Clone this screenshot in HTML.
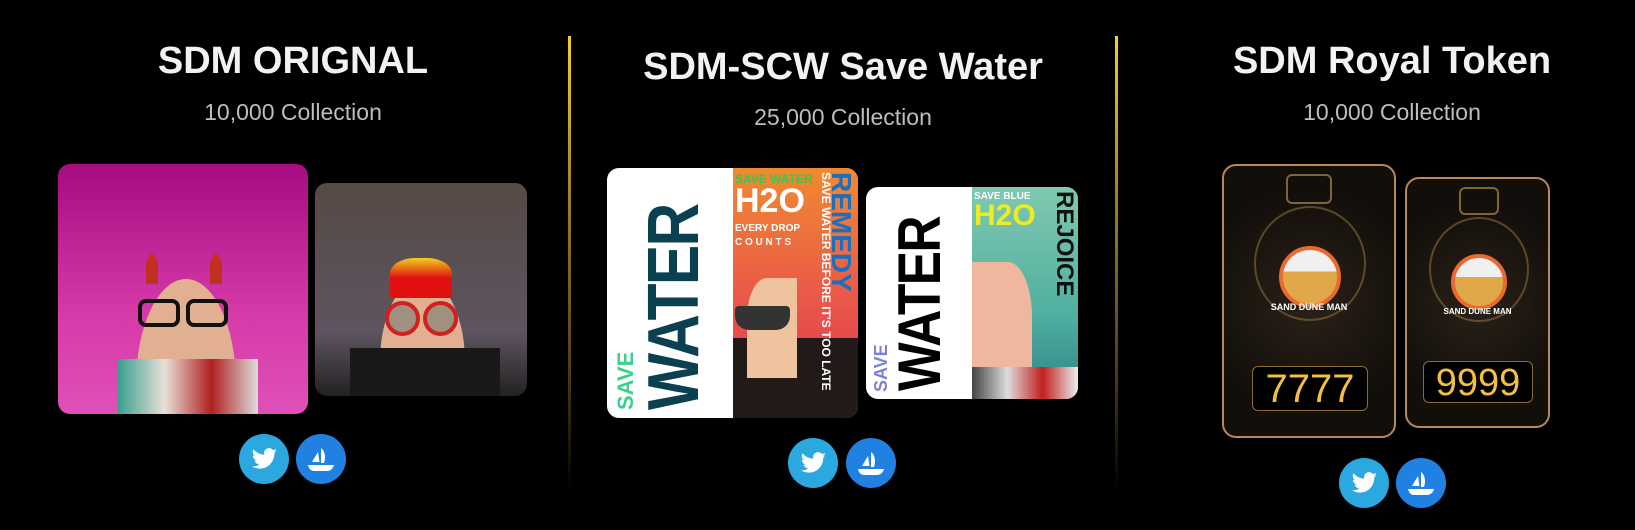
<!DOCTYPE html>
<html><head><meta charset="utf-8"><style>
*{margin:0;padding:0;box-sizing:border-box}
body{width:1635px;height:530px;background:#000;position:relative;overflow:hidden;font-family:"Liberation Sans",sans-serif}
.a{position:absolute}
.t{position:absolute;color:#f2f2f2;font-weight:bold;font-size:38px;text-align:center;white-space:nowrap;transform:translateX(-50%)}
.s{position:absolute;color:#bdbdbd;font-size:23px;text-align:center;white-space:nowrap;transform:translateX(-50%)}
.div{position:absolute;width:3px;top:36px;height:455px;background:linear-gradient(#f5d020,#b08a20 30%,#4a3a12 75%,#000)}
.ic{position:absolute;width:50px;height:50px;border-radius:50%}
.tw{background:#2aa8df}.os{background:#2081e2}
.ic svg{position:absolute;left:0;top:0}
.rot{position:absolute;transform-origin:left top;transform:rotate(-90deg);white-space:nowrap;font-weight:bold}
.rc{position:absolute;border-radius:14px;background:radial-gradient(circle at 50% 50%,#2a2218,#120e0a 70%);border:2px solid #b8875a;overflow:hidden}
.num{position:absolute;background:#000;border:1px solid #8a6a3a;border-radius:6px;color:#f2c040;text-align:center;font-weight:normal}
</style></head><body>

<div class="t" style="left:293px;top:40px">SDM ORIGNAL</div>
<div class="s" style="left:293px;top:99px">10,000 Collection</div>
<div class="t" style="left:843px;top:46px">SDM-SCW Save Water</div>
<div class="s" style="left:843px;top:104px">25,000 Collection</div>
<div class="t" style="left:1392px;top:40px">SDM Royal Token</div>
<div class="s" style="left:1392px;top:99px">10,000 Collection</div>

<div class="div" style="left:568px"></div>
<div class="div" style="left:1115px"></div>

<!-- col1 images -->
<div class="a" style="left:58px;top:164px;width:250px;height:250px;border-radius:12px;overflow:hidden;background:linear-gradient(#a50c80,#d63aa8 60%,#e050b8)">
  <div class="a" style="left:78px;top:115px;width:100px;height:150px;background:#e0b090;border-radius:50% 50% 0 0/70% 70% 0 0"></div>
  <div class="a" style="left:60px;top:195px;width:140px;height:60px;background:linear-gradient(90deg,#3aa090,#e8e0d8,#b02020,#ddd)"></div>
  <div class="a" style="left:80px;top:135px;width:42px;height:28px;border:4px solid #111;border-radius:8px"></div>
  <div class="a" style="left:128px;top:135px;width:42px;height:28px;border:4px solid #111;border-radius:8px"></div>
  <div class="a" style="left:88px;top:90px;width:12px;height:30px;background:#c03020;border-radius:50% 50% 0 0"></div>
  <div class="a" style="left:152px;top:90px;width:12px;height:30px;background:#c03020;border-radius:50% 50% 0 0"></div>
</div>
<div class="a" style="left:315px;top:183px;width:212px;height:213px;border-radius:12px;overflow:hidden;background:linear-gradient(#554a45,#5e5460 70%,#222)">
  <div class="a" style="left:65px;top:95px;width:85px;height:120px;background:#e0b090;border-radius:50% 50% 0 0/70% 70% 0 0"></div>
  <div class="a" style="left:75px;top:75px;width:62px;height:40px;background:linear-gradient(#f0d020,#e01010 50%);border-radius:40% 40% 0 0"></div>
  <div class="a" style="left:35px;top:165px;width:150px;height:50px;background:#1a1818"></div>
  <div class="a" style="left:70px;top:118px;width:35px;height:35px;border:4px solid #d02020;border-radius:50%;background:#a09080"></div>
  <div class="a" style="left:108px;top:118px;width:35px;height:35px;border:4px solid #d02020;border-radius:50%;background:#a09080"></div>
</div>
<div class="ic tw" style="left:239px;top:434px"><svg width="50" height="50" viewBox="0 0 50 50"><path fill="#fff" d="M38 17c-1 .5-2 .7-3 .8 1-.7 2-1.7 2.3-3-1 .6-2 1-3.3 1.3a5 5 0 0 0-8.7 4.6C21 20.5 17 18.5 14.5 15.3c-1.4 2.3-.7 5.3 1.6 6.8-.8 0-1.6-.3-2.3-.6 0 2.5 1.8 4.6 4.1 5.1-.8.2-1.6.3-2.3.1.6 2 2.5 3.5 4.7 3.5-2.1 1.7-4.8 2.4-7.4 2.1 2.3 1.5 5 2.3 7.8 2.3 9.4 0 14.6-7.8 14.6-14.6v-.7c1-.7 1.8-1.6 2.5-2.5z"/></svg></div>
<div class="ic os" style="left:296px;top:434px"><svg width="50" height="50" viewBox="0 0 50 50"><path fill="#fff" d="M16 28l6-10 1.5 10zM25 14c4 3 5 9 3 15h-3zM12 31h26c-1 4-4 6-7 6H18c-3 0-5-2-6-6z"/></svg></div>

<!-- col2 cards -->
<div class="a" style="left:607px;top:168px;width:251px;height:250px;border-radius:12px;overflow:hidden;background:#fff">
  <div class="a" style="left:126px;top:0;width:125px;height:250px;background:linear-gradient(#f08a30,#ea5a48 50%,#e03058)"></div>
  <div class="a" style="left:126px;top:170px;width:125px;height:80px;background:#221a18"></div>
  <div class="a" style="left:140px;top:110px;width:50px;height:100px;background:#efc39e;border-radius:40% 0 0 0"></div>
  <div class="a" style="left:128px;top:138px;width:55px;height:24px;background:#333;border-radius:4px 4px 14px 14px"></div>
  <div class="rot" style="left:36px;top:242px;font-size:72px;color:#0a4050;line-height:62px;letter-spacing:-2px;transform:rotate(-90deg) scaleX(.84)">WATER</div>
  <div class="rot" style="left:7px;top:242px;font-size:22px;color:#3ecf8e;line-height:24px">SAVE</div>
  <div class="a" style="left:128px;top:4px;font-size:12px;color:#2ecc50;font-weight:bold">SAVE WATER</div>
  <div class="a" style="left:128px;top:14px;font-size:34px;color:#fff;font-weight:bold">H2O</div>
  <div class="a" style="left:128px;top:54px;font-size:10px;color:#fff;font-weight:bold;line-height:14px">EVERY DROP<br>C O U N T S</div>
  <div class="rot" style="font-size:28px;color:#1a6fc0;transform:rotate(90deg);left:250px;top:4px">REMEDY</div>
  <div class="rot" style="transform:rotate(90deg);left:226px;top:4px;font-size:12px;color:#fff">SAVE WATER BEFORE IT'S TOO LATE</div>
</div>
<div class="a" style="left:866px;top:187px;width:212px;height:212px;border-radius:12px;overflow:hidden;background:#fff">
  <div class="a" style="left:106px;top:0;width:106px;height:212px;background:linear-gradient(#80c8b0,#50b0a0 60%,#308088)"></div>
  <div class="a" style="left:106px;top:75px;width:60px;height:137px;background:#efb89e;border-radius:0 40% 0 0"></div>
  <div class="a" style="left:106px;top:180px;width:106px;height:32px;background:linear-gradient(90deg,#444,#ddd,#c02020,#eee)"></div>
  <div class="rot" style="left:28px;top:204px;font-size:60px;color:#000;line-height:52px;letter-spacing:-2px;transform:rotate(-90deg) scaleX(.86)">WATER</div>
  <div class="rot" style="left:5px;top:205px;font-size:18px;color:#8080d0;line-height:20px">SAVE</div>
  <div class="a" style="left:108px;top:4px;font-size:10px;color:#fff;font-weight:bold">SAVE BLUE</div>
  <div class="a" style="left:108px;top:12px;font-size:30px;color:#f0ea20;font-weight:bold">H2O</div>
  <div class="rot" style="transform:rotate(90deg);left:212px;top:4px;font-size:24px;color:#111">REJOICE</div>
</div>
<div class="ic tw" style="left:788px;top:438px"><svg width="50" height="50" viewBox="0 0 50 50"><path fill="#fff" d="M38 17c-1 .5-2 .7-3 .8 1-.7 2-1.7 2.3-3-1 .6-2 1-3.3 1.3a5 5 0 0 0-8.7 4.6C21 20.5 17 18.5 14.5 15.3c-1.4 2.3-.7 5.3 1.6 6.8-.8 0-1.6-.3-2.3-.6 0 2.5 1.8 4.6 4.1 5.1-.8.2-1.6.3-2.3.1.6 2 2.5 3.5 4.7 3.5-2.1 1.7-4.8 2.4-7.4 2.1 2.3 1.5 5 2.3 7.8 2.3 9.4 0 14.6-7.8 14.6-14.6v-.7c1-.7 1.8-1.6 2.5-2.5z"/></svg></div>
<div class="ic os" style="left:846px;top:438px"><svg width="50" height="50" viewBox="0 0 50 50"><path fill="#fff" d="M16 28l6-10 1.5 10zM25 14c4 3 5 9 3 15h-3zM12 31h26c-1 4-4 6-7 6H18c-3 0-5-2-6-6z"/></svg></div>

<!-- col3 royal -->
<div class="rc" style="left:1222px;top:164px;width:174px;height:274px">
  <div class="a" style="left:62px;top:8px;width:46px;height:30px;border:2px solid #b08850;border-radius:6px;opacity:.7"></div>
  <div class="a" style="left:55px;top:80px;width:62px;height:62px;border-radius:50%;background:linear-gradient(#f0f0f0 40%,#e0a848 40%);border:4px solid #e86a30"></div>
  <div class="a" style="left:30px;top:40px;width:112px;height:115px;border:2px solid #8a6a3a;border-radius:50%;opacity:.6"></div>
  <div class="a" style="left:0;top:136px;width:170px;text-align:center;color:#fff;font-size:9px;font-weight:bold">SAND DUNE MAN</div>
  <div class="num" style="left:28px;top:200px;width:116px;height:45px;font-size:40px;line-height:45px">7777</div>
</div>
<div class="rc" style="left:1405px;top:177px;width:145px;height:251px">
  <div class="a" style="left:52px;top:8px;width:40px;height:28px;border:2px solid #b08850;border-radius:6px;opacity:.7"></div>
  <div class="a" style="left:44px;top:75px;width:56px;height:56px;border-radius:50%;background:linear-gradient(#f0f0f0 40%,#e0a848 40%);border:4px solid #e86a30"></div>
  <div class="a" style="left:22px;top:38px;width:100px;height:105px;border:2px solid #8a6a3a;border-radius:50%;opacity:.6"></div>
  <div class="a" style="left:0;top:128px;width:141px;text-align:center;color:#fff;font-size:8px;font-weight:bold">SAND DUNE MAN</div>
  <div class="num" style="left:16px;top:182px;width:110px;height:42px;font-size:38px;line-height:42px">9999</div>
</div>
<div class="ic tw" style="left:1339px;top:458px"><svg width="50" height="50" viewBox="0 0 50 50"><path fill="#fff" d="M38 17c-1 .5-2 .7-3 .8 1-.7 2-1.7 2.3-3-1 .6-2 1-3.3 1.3a5 5 0 0 0-8.7 4.6C21 20.5 17 18.5 14.5 15.3c-1.4 2.3-.7 5.3 1.6 6.8-.8 0-1.6-.3-2.3-.6 0 2.5 1.8 4.6 4.1 5.1-.8.2-1.6.3-2.3.1.6 2 2.5 3.5 4.7 3.5-2.1 1.7-4.8 2.4-7.4 2.1 2.3 1.5 5 2.3 7.8 2.3 9.4 0 14.6-7.8 14.6-14.6v-.7c1-.7 1.8-1.6 2.5-2.5z"/></svg></div>
<div class="ic os" style="left:1396px;top:458px"><svg width="50" height="50" viewBox="0 0 50 50"><path fill="#fff" d="M16 28l6-10 1.5 10zM25 14c4 3 5 9 3 15h-3zM12 31h26c-1 4-4 6-7 6H18c-3 0-5-2-6-6z"/></svg></div>

</body></html>
